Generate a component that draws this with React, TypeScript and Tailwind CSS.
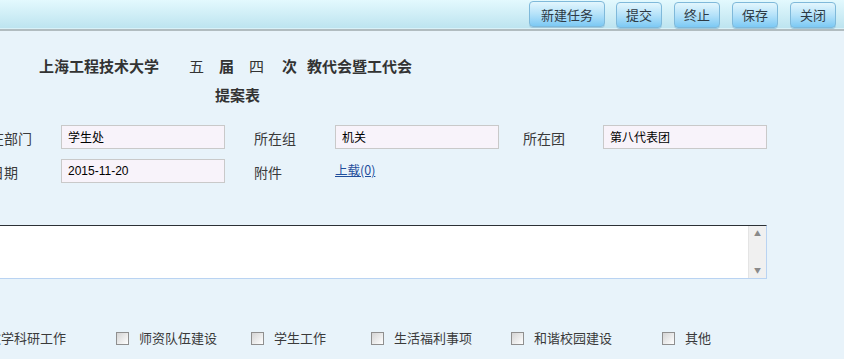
import React from 'react';

const font = { fontFamily: '"Noto Sans CJK SC", "Liberation Sans", sans-serif' };

function ToolButton({ label, width }: { label: string; width: string }) {
  return (
    <button
      className={`${width} h-[26px] rounded-[4px] border border-[#7fb9da] bg-gradient-to-b from-[#e3f6fd] via-[#b5e2f9] to-[#7cc9f4] text-[13px] text-[#2d3a45] leading-none shadow-[0_1px_0_#9fc9dd]`}
    >
      {label}
    </button>
  );
}

function Field({ value }: { value: string }) {
  return (
    <div className="w-[164px] h-[24px] border border-[#c9c9c9] bg-[#f8f3fa] pl-[6px] flex items-center text-[12px] text-black">
      {value}
    </div>
  );
}

function Check() {
  return (
    <span className="inline-block w-[13px] h-[13px] border border-[#8f8f8f] bg-gradient-to-br from-[#d4d4d4] to-white shrink-0" />
  );
}

export default function App() {
  const topics = [
    { label: '师资队伍建设', ml: 'ml-[50px]' },
    { label: '学生工作', ml: 'ml-[34px]' },
    { label: '生活福利事项', ml: 'ml-[45px]' },
    { label: '和谐校园建设', ml: 'ml-[39px]' },
    { label: '其他', ml: 'ml-[50px]' },
  ];

  return (
    <div className="w-[844px] h-[359px] overflow-hidden bg-[#e8f3fa]" style={font}>
      <div className="h-[29px] bg-gradient-to-b from-[#e3f9fe] to-[#bde4f0] border-b border-[#d8f1f8] flex justify-end items-start pt-[1px] pr-[8px]">
        <ToolButton label="新建任务" width="w-[76px]" />
        <div className="ml-[11px]"><ToolButton label="提交" width="w-[46px]" /></div>
        <div className="ml-[12px]"><ToolButton label="终止" width="w-[46px]" /></div>
        <div className="ml-[12px]"><ToolButton label="保存" width="w-[46px]" /></div>
        <div className="ml-[12px]"><ToolButton label="关闭" width="w-[46px]" /></div>
      </div>
      <div className="h-[2px] bg-[#b1bcc0]" />

      <div className="mt-[25px] pl-[39px] flex items-center h-[20px] text-[15px] font-bold text-[#333]">
        <span>上海工程技术大学</span>
        <span className="ml-[30px] font-normal">五</span>
        <span className="ml-[15px]">届</span>
        <span className="ml-[15px] font-normal">四</span>
        <span className="ml-[18px]">次</span>
        <span className="ml-[10px]">教代会暨工代会</span>
      </div>
      <div className="mt-[9px] pl-[215px] h-[20px] flex items-center text-[15px] font-bold text-[#333]">提案表</div>

      <div className="mt-[19px] ml-[-24px] flex items-center text-[14px] text-[#3a3a3a]">
        <span className="w-[85px] pt-[4px]">所在部门</span>
        <Field value="学生处" />
        <span className="ml-[29px] w-[81px] pt-[4px]">所在组</span>
        <Field value="机关" />
        <span className="ml-[24px] w-[80px] pt-[4px]">所在团</span>
        <Field value="第八代表团" />
      </div>
      <div className="mt-[9px] ml-[-38px] flex items-center text-[14px] text-[#3a3a3a]">
        <span className="w-[99px] pt-[4px]">提案日期</span>
        <div className="w-[164px] h-[24px] border border-[#c9c9c9] bg-[#f8f3fa] pl-[6px] flex items-center text-[12px] text-black" style={{ fontFamily: '"Liberation Sans", sans-serif' }}>
          2015-11-20
        </div>
        <span className="ml-[29px] w-[81px] pt-[4px]">附件</span>
        <a className="text-[12.5px] text-[#1f4e9c] underline" href="#">上载(0)</a>
      </div>

      <div className="mt-[42px] ml-[-24px] w-[791px] h-[54px] bg-white border border-[#b9d3f2] border-t-[#2c3136] flex justify-end">
        <div className="w-[18px] h-full bg-[#f0f0f0] border-l border-[#e4e4e4] flex flex-col items-center justify-between py-[4px] text-[7px] text-[#8a8a8a] leading-none">
          <span>▲</span>
          <span>▼</span>
        </div>
      </div>

      <div className="mt-[49px] ml-[-12px] h-[20px] flex items-center text-[13px] text-[#3a3a3a]">
        <span>教学科研工作</span>
        {topics.map((t) => (
          <div key={t.label} className={`${t.ml} flex items-center`}>
            <Check />
            <span className="ml-[10px]">{t.label}</span>
          </div>
        ))}
      </div>
    </div>
  );
}
